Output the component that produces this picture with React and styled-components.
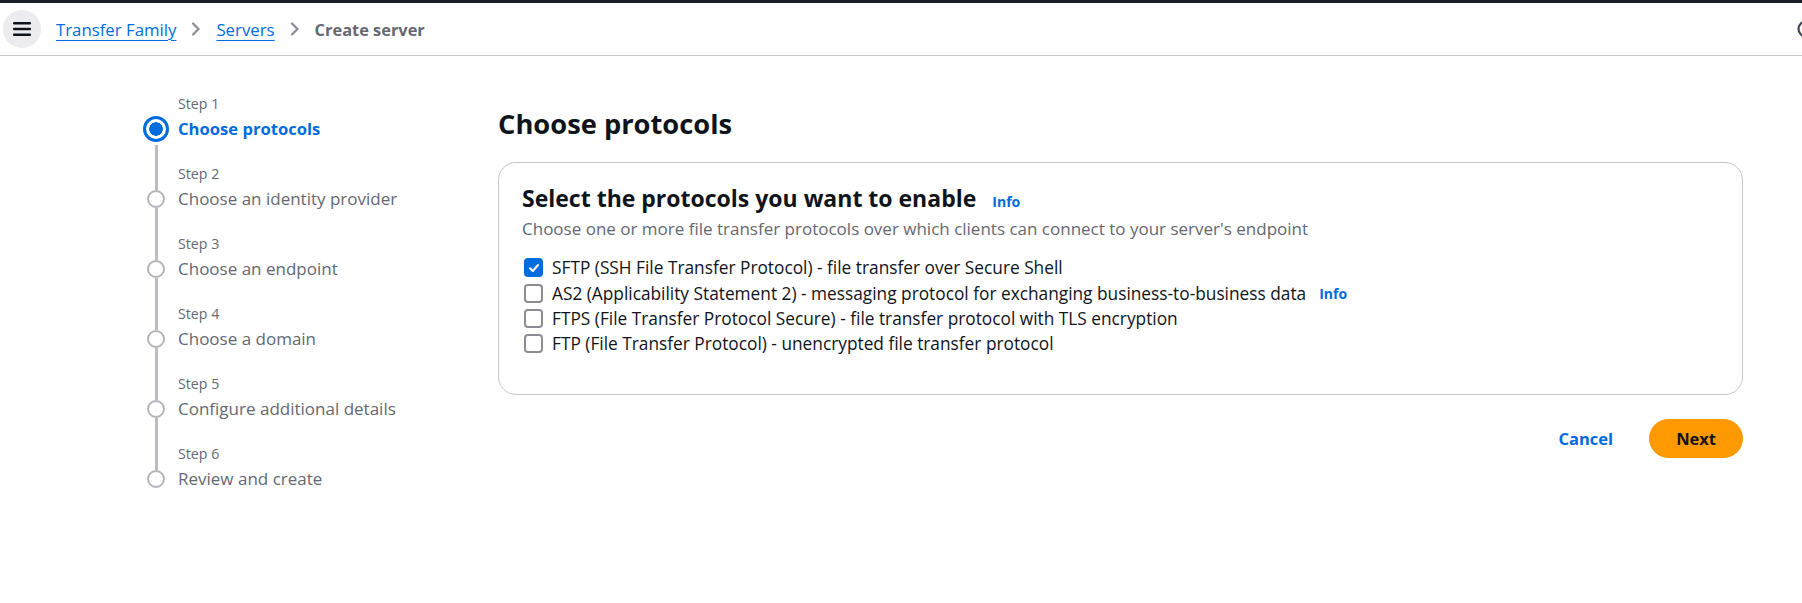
import React from "react";
import styled, { createGlobalStyle } from "styled-components";

const GlobalStyle = createGlobalStyle`
  html, body {
    margin: 0;
    padding: 0;
    background: #ffffff;
  }
  body {
    font-family: "Open Sans", "Liberation Sans", sans-serif;
    color: #0f141a;
  }
  * {
    box-sizing: border-box;
  }
`;

const steps = [
  "Choose protocols",
  "Choose an identity provider",
  "Choose an endpoint",
  "Choose a domain",
  "Configure additional details",
  "Review and create",
];

const protocols = [
  { label: "SFTP (SSH File Transfer Protocol) - file transfer over Secure Shell", checked: true },
  { label: "AS2 (Applicability Statement 2) - messaging protocol for exchanging business-to-business data", info: true },
  { label: "FTPS (File Transfer Protocol Secure) - file transfer protocol with TLS encryption" },
  { label: "FTP (File Transfer Protocol) - unencrypted file transfer protocol" },
];

export default function App() {
  return (
    <>
      <GlobalStyle />
      <Page>
        <TopBar>
          <MenuButton aria-label="Menu">
            <svg width="18" height="16" viewBox="0 0 18 16">
              <rect x="0" y="1" width="18" height="2.6" rx="1" fill="#0f141a" />
              <rect x="0" y="6.7" width="18" height="2.6" rx="1" fill="#0f141a" />
              <rect x="0" y="12.4" width="18" height="2.6" rx="1" fill="#0f141a" />
            </svg>
          </MenuButton>
          <Breadcrumbs>
            <Crumb href="#">Transfer Family</Crumb>
            <Chevron />
            <Crumb href="#">Servers</Crumb>
            <Chevron />
            <Current>Create server</Current>
          </Breadcrumbs>
          <Spacer />
          <EdgeIcon>
            <svg width="20" height="20" viewBox="0 0 20 20">
              <circle cx="10" cy="10" r="7.5" fill="none" stroke="#424650" strokeWidth="2.2" />
            </svg>
          </EdgeIcon>
        </TopBar>

        <Layout>
          <StepNav>
            {steps.map((title, i) => (
              <Step key={title}>
                <Rail>{i > 0 && <Line />}</Rail>
                <StepLabel>Step {i + 1}</StepLabel>
                <Marker>
                  <Line $hidden={i === 0} $fixed={i === 0 ? 0 : 4} />
                  <Dot $active={i === 0} />
                  <Line $hidden={i === steps.length - 1} $grow />
                </Marker>
                <StepTitle $active={i === 0}>{title}</StepTitle>
              </Step>
            ))}
          </StepNav>

          <Main>
            <PageTitle>Choose protocols</PageTitle>
            <Container>
              <HeadingRow>
                <ContainerTitle>Select the protocols you want to enable</ContainerTitle>
                <InfoLink href="#">Info</InfoLink>
              </HeadingRow>
              <Description>
                Choose one or more file transfer protocols over which clients can connect to your server's endpoint
              </Description>
              <OptionList>
                {protocols.map((p) => (
                  <Option key={p.label}>
                    <Box $checked={p.checked}>
                      {p.checked && (
                        <svg width="12" height="12" viewBox="0 0 12 12">
                          <path d="M2 6.3 L4.9 9 L10 3" fill="none" stroke="#fff" strokeWidth="2" strokeLinecap="round" strokeLinejoin="round" />
                        </svg>
                      )}
                    </Box>
                    <OptionText>{p.label}</OptionText>
                    {p.info && <InfoLink href="#">Info</InfoLink>}
                  </Option>
                ))}
              </OptionList>
            </Container>
            <Actions>
              <LinkButton>Cancel</LinkButton>
              <PrimaryButton>Next</PrimaryButton>
            </Actions>
          </Main>
        </Layout>
      </Page>
    </>
  );
}

function Chevron() {
  return (
    <ChevronWrap>
      <svg width="10" height="14" viewBox="0 0 10 14">
        <path d="M2 1.5 L7.5 7 L2 12.5" fill="none" stroke="#8c8c94" strokeWidth="2.2" strokeLinecap="round" />
      </svg>
    </ChevronWrap>
  );
}

const Page = styled.div`
  width: 1802px;
  min-height: 603px;
  border-top: 3px solid #161d26;
  overflow: hidden;
`;

const TopBar = styled.header`
  height: 53px;
  display: flex;
  align-items: center;
  padding-left: 3px;
  border-bottom: 1px solid #c6c6cd;
`;

const MenuButton = styled.button`
  width: 38px;
  height: 38px;
  border-radius: 50%;
  border: none;
  background: #ebebf0;
  display: flex;
  align-items: center;
  justify-content: center;
  padding: 0;
`;

const Breadcrumbs = styled.nav`
  display: flex;
  align-items: center;
  margin-left: 15px;
  font-size: 16.8px;
  gap: 15px;
`;

const Crumb = styled.a`
  color: #006ce0;
  text-decoration: underline;
  text-underline-offset: 4px;
  text-decoration-thickness: 1px;
`;

const Current = styled.span`
  color: #656871;
  font-weight: 700;
  font-size: 16.4px;
`;

const ChevronWrap = styled.span`
  display: flex;
  align-items: center;
`;

const Spacer = styled.div`
  flex: 1;
`;

const EdgeIcon = styled.span`
  display: flex;
  margin-right: -14px;
`;

const Layout = styled.div`
  display: flex;
  align-items: flex-start;
  padding: 36px 59px 0 143px;
  gap: 42px;
`;

const StepNav = styled.ol`
  list-style: none;
  margin: 0;
  padding: 0;
  width: 313px;
  flex-shrink: 0;
`;

const Step = styled.li`
  display: grid;
  grid-template-columns: 26px 1fr;
  grid-template-rows: 24px 46px;
  column-gap: 9px;
`;

const Rail = styled.div`
  display: flex;
  justify-content: center;
`;

const Marker = styled.div`
  display: flex;
  flex-direction: column;
  align-items: center;
`;

const Line = styled.div`
  width: 3px;
  background: ${(p) => (p.$hidden ? "transparent" : "#bcbcc3")};
  flex: ${(p) => (p.$grow ? 1 : "none")};
  height: ${(p) => (p.$fixed !== undefined ? `${p.$fixed}px` : "auto")};
  align-self: ${(p) => (p.$grow || p.$fixed !== undefined ? "center" : "stretch")};
`;

const Dot = styled.span`
  width: ${(p) => (p.$active ? 26 : 18)}px;
  height: ${(p) => (p.$active ? 26 : 18)}px;
  border-radius: 50%;
  flex-shrink: 0;
  border: ${(p) => (p.$active ? "3px solid #006ce0" : "2.5px solid #b4b4bb")};
  background: ${(p) => (p.$active ? "radial-gradient(circle, #006ce0 0 6.5px, #ffffff 7px)" : "#ffffff")};
  margin-bottom: ${(p) => (p.$active ? 3 : 0)}px;
`;

const StepLabel = styled.span`
  font-size: 14.2px;
  line-height: 24px;
  color: #656871;
`;

const StepTitle = styled.span`
  font-size: ${(p) => (p.$active ? 16.6 : 17)}px;
  line-height: 26px;
  color: ${(p) => (p.$active ? "#006ce0" : "#656871")};
  font-weight: ${(p) => (p.$active ? 700 : 400)};
`;

const Main = styled.main`
  flex: 1;
  display: flex;
  flex-direction: column;
  margin-top: 14px;
`;

const PageTitle = styled.h1`
  margin: 0 0 20px;
  font-size: 27.3px;
  line-height: 36px;
  font-weight: 700;
  color: #0f141a;
`;

const Container = styled.section`
  border: 1px solid #c6c6cd;
  border-radius: 18px;
  padding: 21px 23px 37px;
`;

const HeadingRow = styled.div`
  display: flex;
  align-items: baseline;
  gap: 16px;
`;

const ContainerTitle = styled.h2`
  margin: 0;
  font-size: 23px;
  line-height: 28px;
  font-weight: 700;
  color: #0f141a;
`;

const InfoLink = styled.a`
  color: #006ce0;
  font-size: 14px;
  font-weight: 700;
  text-decoration: none;
`;

const Description = styled.p`
  margin: 6px 0 15px;
  font-size: 17px;
  line-height: 22px;
  color: #656871;
`;

const OptionList = styled.div`
  display: flex;
  flex-direction: column;
`;

const Option = styled.label`
  display: flex;
  align-items: center;
  height: 25.4px;
  gap: 9px;
  padding-left: 2px;
`;

const Box = styled.span`
  width: 19px;
  height: 19px;
  border-radius: 4px;
  flex-shrink: 0;
  display: flex;
  align-items: center;
  justify-content: center;
  background: ${(p) => (p.$checked ? "#006ce0" : "#ffffff")};
  border: ${(p) => (p.$checked ? "none" : "2px solid #8c8c94")};
`;

const OptionText = styled.span`
  font-size: 17.3px;
  color: #0f141a;
  margin-right: 4px;
`;

const Actions = styled.div`
  display: flex;
  justify-content: flex-end;
  align-items: center;
  margin-top: 24px;
  gap: 17px;
`;

const LinkButton = styled.button`
  border: none;
  background: none;
  font-family: inherit;
  font-size: 16.5px;
  font-weight: 700;
  color: #006ce0;
  padding: 0 19px;
  height: 39px;
`;

const PrimaryButton = styled.button`
  border: none;
  background: #ff9900;
  color: #0f141a;
  font-family: inherit;
  font-size: 16.5px;
  font-weight: 700;
  height: 39px;
  padding: 0 27px;
  border-radius: 20px;
`;
